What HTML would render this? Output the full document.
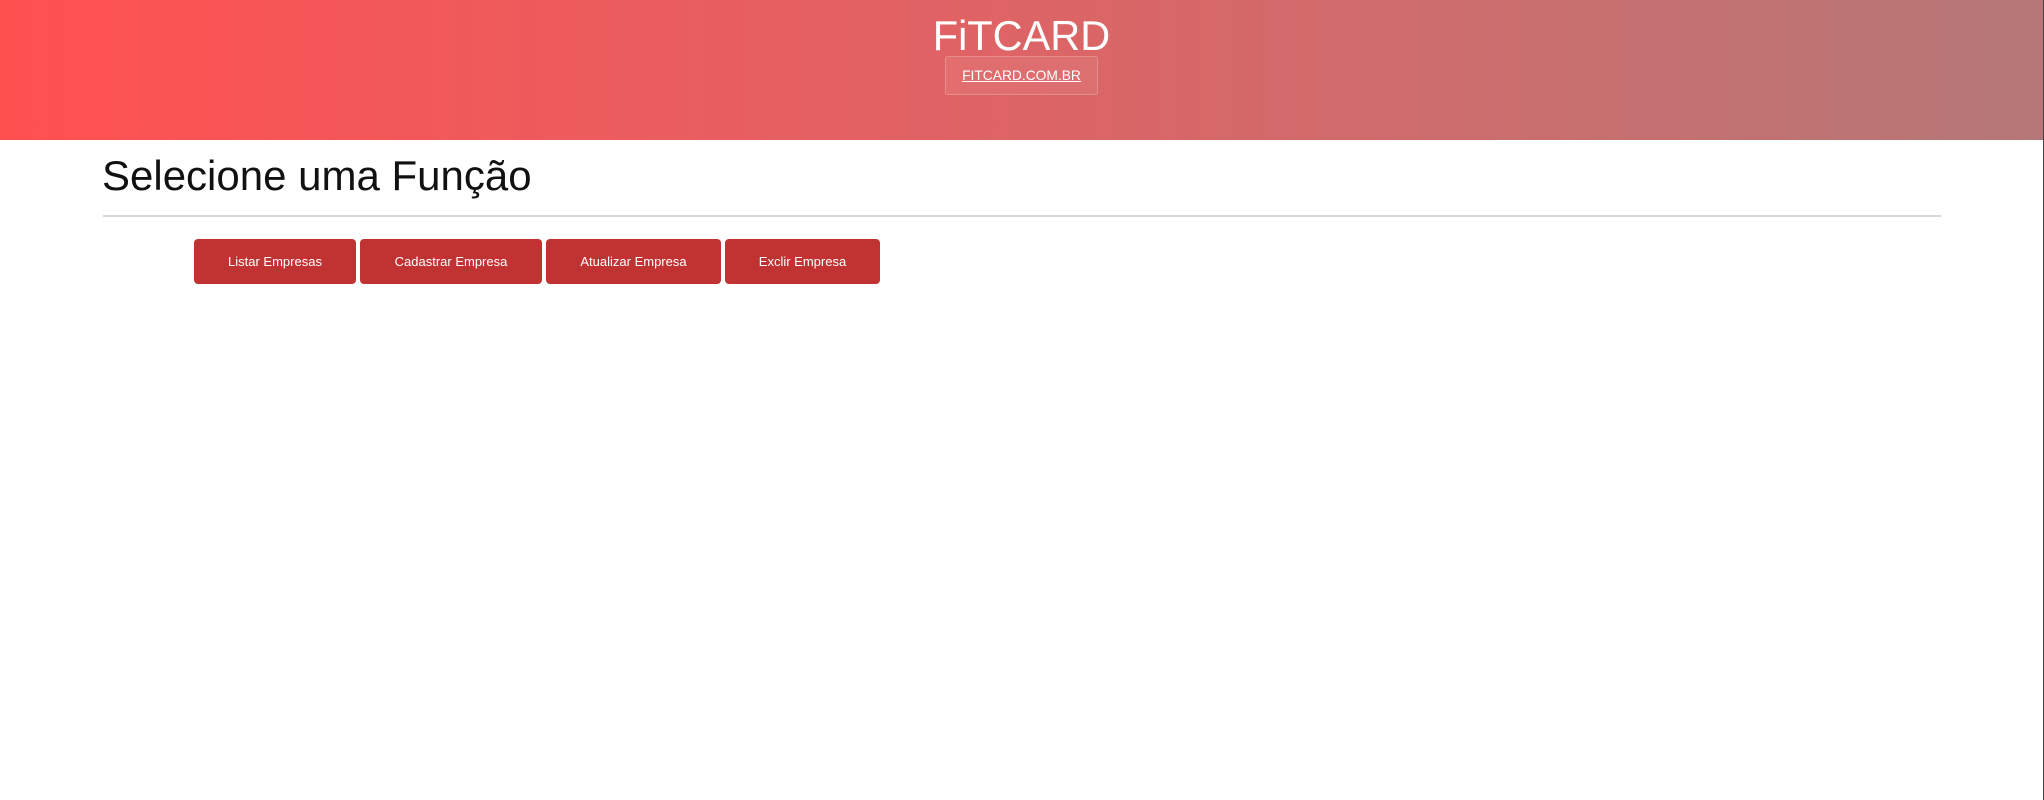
<!DOCTYPE html>
<html><head><meta charset="utf-8"><style>
html,body{margin:0;padding:0;width:2044px;height:800px;overflow:hidden;background:#fff;font-family:"Liberation Sans",Arial,sans-serif;position:relative}
.hdr{position:absolute;left:0;top:0;width:2043px;height:140px;background:linear-gradient(90deg,#ff5050 0%,#e56062 40%,#c96e6e 75%,#b57777 100%)}
.t{position:absolute;left:0;width:2043px;top:12px;text-align:center;color:#fff;font-size:41.5px;line-height:48px}
.lk{position:absolute;left:945px;top:56px;width:151px;height:37px;border:1px solid rgba(255,255,255,.22);background:rgba(255,255,255,.07);border-radius:3px;color:#fff;font-size:13.8px;text-align:center;line-height:37px;text-decoration:underline}
h1{position:absolute;left:102px;top:151px;margin:0;font-weight:normal;font-size:42px;line-height:50px;color:#111}
.hr{position:absolute;left:103px;top:215px;width:1838px;height:2px;background:#d6d6d6}
.b{position:absolute;top:239px;height:45px;background:#c13333;border-radius:4px;color:#fff;font-size:13px;line-height:45px;text-align:center}
.sb{position:absolute;right:0;top:0;width:1px;height:800px;background:#444}
</style></head><body>
<div class="hdr"><div class="t">FiTCARD</div><div class="lk">FITCARD.COM.BR</div></div>
<h1>Selecione uma Função</h1>
<div class="hr"></div>
<div class="b" style="left:194px;width:162px">Listar Empresas</div>
<div class="b" style="left:360px;width:182px">Cadastrar Empresa</div>
<div class="b" style="left:546px;width:175px">Atualizar Empresa</div>
<div class="b" style="left:725px;width:155px">Exclir Empresa</div>
<div class="sb"></div>
</body></html>
